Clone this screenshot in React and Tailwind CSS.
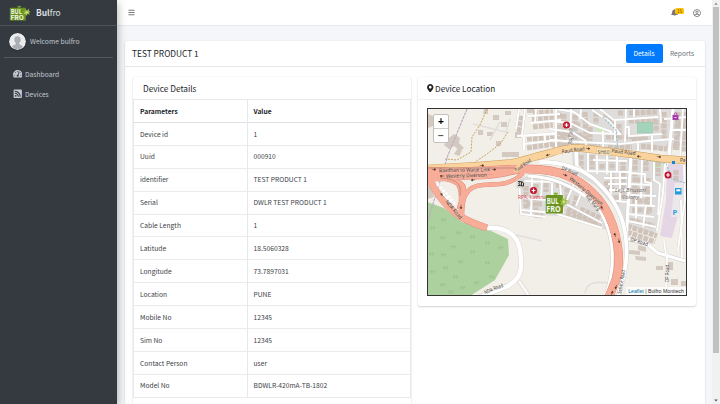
import React from "react";
import { FaBars, FaBell, FaRegUserCircle, FaTachometerAlt, FaRssSquare, FaMapMarkerAlt } from "react-icons/fa";

const rows = [
  ["Device id", "1"],
  ["Uuid", "000910"],
  ["identifier", "TEST PRODUCT 1"],
  ["Serial", "DWLR TEST PRODUCT 1"],
  ["Cable Length", "1"],
  ["Latitude", "18.5060328"],
  ["Longitude", "73.7897031"],
  ["Location", "PUNE"],
  ["Mobile No", "12345"],
  ["Sim No", "12345"],
  ["Contact Person", "user"],
  ["Model No", "BDWLR-420mA-TB-1802"],
];

function Logo(props) {
  return (
    <svg viewBox="0 0 25 18" {...props}>
      <rect x="0.5" y="3" width="18" height="14.5" rx="1" fill="#6b9322" />
      <path d="M11 3V0.8M9 1.5l2 1.2 2-1.2" stroke="#7fb52a" strokeWidth="1" fill="none" />
      <text x="1.600" y="9.700" fontSize="7" fontWeight="700" fill="#f4f8e8" textLength="12.500" lengthAdjust="spacingAndGlyphs">BUL</text>
      <text x="1.200" y="16.500" fontSize="7" fontWeight="700" fill="#f4f8e8" textLength="15" lengthAdjust="spacingAndGlyphs">FRO</text>
      <path d="M15 7l2.500.5.5-3 1.800 2 2.500-2.500-.4 2.900 2.200.3-2.200 1.500 1.200 2-2.800-.5-1 2.300-1.200-2.300-2.600.4 1.500-2z" fill="#9cc250" />
      <circle cx="19.500" cy="8.300" r="1.100" fill="#e8e27a" />
    </svg>
  );
}

// Minor streets, drawn first as a casing and then as a white core.
const streets = [
  "M516 129l3-20M525 109l-3 27 34-2M528 116l32-2M530 123l31-3M536 109l-1 14M517 136l40-3M524 136v14M545 133v10M524 144l34-4M556 109v44",
  "M557 109l17 3 16 12 22 8M550 121l20 2 20 10 30 1M550 129l22 3 14 9M571 109l-1 41M581 109l-1 10M550 140l30 2 40 2 28-3M603 131v18M586 142v6",
  "M592 110l17 11 12 14M600 109l14 11 44-3M615 121v20M626 109l-1 33M634 109v8M660 109l1 14M625 127l4 0v9l33-2M638 141v10M648 141l26-2M652 134v18M664 119l24-2M672 130h14",
  "M683 109l-3 48",
  "M577 150l1 21 52 1M588 152v19M597 152v22M607 154v20M593 160l34 1M617 155v17M584 171l-8-6-1-15",
  "M604 178h23M611 172v24M620 172v30M609 190h18M615 201l12 1M608 184h19",
  "M642 158l-1 40M630 173l15 1v8l6 1v23M654 160v20l6 4-2 31M629 184l21 1M629 195l27 1M629 205l26 1M628 214l26 3M646 205l-3 22M636 196v22M628 221l28 6",
  "M665 163l-2 30-6 38M664 170l8 5M684 165l1 35-7 50",
  "M519 178l2 36 24 3M523 181l36 1M532 177l-1 39M542 178l-1 22M523 198l23 2M552 181v20M522 210l32 3M560 184l3 29M574 184l-8 18M582 191l-6 15M564 203l38 20",
  "M557 214l45 14",
  "M667 254l-1 42M681 200l1 58M664 241l2 14",
];

// Wider through streets.
const wideStreets = ["M673 109l-4 46-3 12", "M631 156l-5 86", "M625 238l22 6 11 9 27 8"];

// Dash patterns along these lines read as rows of separate buildings.
const blocks = [
  "M533 113l20-1M532 119l22-1M533 127l20-2M519 132l3-16M527 139l27-2M527 148l26-4",
  "M559 113l-1 32M564 114v34M575 115v27M585 112l1 28M590 127v22M596 112v12M604 114l10 9M560 125h20M560 135h22M552 145l48 2M573 137h11",
  "M618 113l6 0M629 113l28-1M619 124v14M629 121h28M632 139h16M656 120v12M664 112v26M678 112l-2 38M667 146h15M641 146l26 3M606 137h38M608 147h24M676 124h9M677 134h9",
  "M581 155v14M592 155v14M602 164v9M612 158v35M623 160v38M635 160v38M646 161v10M658 162v14M648 178v36M616 195v10M606 181l3 11M637 180h9M632 190h18M632 201h18M632 210h20",
  "M526 186v26M536 184v28M546 183v9M527 204h15M534 215l9 1M556 185l7 1M567 188v16M577 196l-3 10M567 209l30 14M580 209l20 9M566 214l35 12",
  "M627 226l30 10M627 232l28 10M630 220l24 6M676 170v12M684 112v40",
];

const mainRoad = "M427 168.500L480 165.500L512 163C524 160 538 156 552 152.500C561 149 571 147.500 582 148.200L600 150.300L633 154.500L660 158.500L687 160.500";
const motorway = "M427 171L455 172L487 170.500L520 169C540 168.500 557 171 568 176C584 183 600 197 609 216C619 238 621 263 616 279L609 297";
const nda = "M426 173C432 185 439 197 446 204C455 214 463 220 487 228";
const ramps = [
  "M434 174C450 182 464 179 464 190C464 197 460 203 459 209",
  "M427 179L446 179C456 181 461 184 461 196L461 217",
  "M462 216C462 200 464 186 483 185L500 184C510 183 517 179 523 173",
  "M428 177C440 177 460 178 484 177C500 176 510 173 520 171",
];

function Label({ x, y, r = 0, w, s = 5.3, fill = "#3a302a", children }) {
  return (
    <text
      x={x}
      y={y}
      transform={`rotate(${r} ${x} ${y})`}
      textLength={w}
      lengthAdjust="spacingAndGlyphs"
      fontSize={s}
      fill={fill}
      stroke="#ffffff"
      strokeOpacity="0.3"
      strokeWidth="0.6"
      paintOrder="stroke"
    >
      {children}
    </text>
  );
}

function Arrow({ x, y, r = 0 }) {
  return <path transform={`translate(${x} ${y}) rotate(${r})`} d="M-2.200 0H1M0.300-0.900L2 0L0.300 0.900z" fill="#4b3326" stroke="#4b3326" strokeWidth="0.5" />;
}

function Hospital({ x, y }) {
  return (
    <g>
      <circle cx={x} cy={y} r="3.500" fill="#c4122f" />
      <path d={`M${x - 1.9} ${y}h3.800M${x} ${y - 1.9}v3.800`} stroke="#fff" strokeWidth="1.200" />
    </g>
  );
}

function MapDrawing() {
  return (
    <svg className="block h-full w-full" viewBox="428 109 258 186" preserveAspectRatio="none" fontFamily="'Noto Sans', sans-serif">
      <rect x="427" y="108" width="260" height="188" fill="#f2efe9" />
      <path d="M556 109H687V150L633 150L582 145L556 148zM572 151L632 158L664 163L656 235L626 226L612 204L596 186L573 172z" fill="#dfdddc" />
      <path d="M519 177L545 175L572 184L600 208L610 231L560 216L519 214z" fill="#dfdddc" />
      <path d="M427 202L444 208L462 222L487 229L508 239L509 255L495 280L470 296H427z" fill="#add19e" />
      <g>
        {[[441, 220], [456, 233], [440, 238], [470, 237], [451, 247], [485, 243], [498, 248], [441, 255], [470, 252], [458, 262], [443, 268], [485, 263], [430, 272], [453, 277], [440, 285], [474, 283], [489, 277], [460, 288], [448, 292], [430, 228], [429, 254]].map(([x, y]) => (
          <path key={`${x}-${y}`} d={`M${x} ${y}q1.200-3 2.400 0M${x + 2.6} ${y}q1.200-3 2.400 0M${x + 1.2} ${y}v1.500M${x + 3.8} ${y}v1.500`} fill="none" stroke="#8fba80" strokeWidth="0.7" />
        ))}
      </g>
      <path d="M667 163L686 165L682 200L672 238L660 236L666 200z" fill="#e5d6e6" />
      <path d="M675 183h8l-3 34h-9z" fill="#ece9ea" />
      <path d="M595 127l5-1 8 5-9 1zM652 163l8-2 3 5-8 3z" fill="#c8ecb4" />

      <g fill="#d4c9c1">
        <path d="M449 138l5-4 6 4-1 5 5 5-4 3-6-5-5 3-5-4zM458 148l4 3-3 5-5-2zM428 114l5 2v10l-5 2zM428 186h4l2 11-6 2z" />
        <path d="M484 109h4v5h-5zM493 115h6v5h-6zM487 132h6v4h-6zM478 130h5v5h-5zM501 122h6v5h-6zM502 152h17v5h-17zM515 132h6v6h-6zM527 109h7v4h-7zM505 111h6v4h-6zM496 141h5v5h-5z" />
        <path d="M629 250l11 1v4l-11-1zM638 245l8 2v5l-8-2zM656 266h7v4h-7zM671 279h7v6h-7zM668 262h5v8h-5zM681 281h5v5h-5zM635 256l11 1v4l-10-1z" />
      </g>
      <g fill="none" stroke="#d0c3b9" strokeWidth="5.200" strokeDasharray="4.800 1">
        {blocks.map((d) => <path key={d} d={d} />)}
      </g>
      <g fill="none" stroke="#d0cdca" strokeWidth="2.500" strokeLinejoin="round">
        {streets.map((d) => <path key={d} d={d} />)}
      </g>
      <g fill="none" stroke="#cbc8c5" strokeWidth="4" strokeLinejoin="round">
        {wideStreets.map((d) => <path key={d} d={d} />)}
      </g>
      <g fill="none" stroke="#fff" strokeWidth="1.900" strokeLinejoin="round">
        {streets.map((d) => <path key={d} d={d} />)}
      </g>
      <g fill="none" stroke="#fff" strokeWidth="3.300" strokeLinejoin="round">
        {wideStreets.map((d) => <path key={d} d={d} />)}
      </g>
      <rect x="637.500" y="122.500" width="15" height="10.500" fill="#a3d3ba" stroke="#8ec4a7" strokeWidth="0.5" />
      <path d="M473 124l33 8 4-13M500 122l-10 18M516 235l26 6M585 293c2-10 8-12 24-10" fill="none" stroke="#e2dfda" strokeWidth="1.600" />
      <path d="M487 109l-7 16-8 12-1 15-14 8-12-1M508 132l-8 12-13 10-12 8" fill="none" stroke="#c9a45c" strokeWidth="1" strokeDasharray="2 1.200" />
      <path d="M467 109L448 155L428 220" fill="none" stroke="#bba9c5" strokeWidth="1.100" strokeDasharray="3 0.8" />
      <path d="M603 117l13 13 2 20M632 158l34 5 6 16 14 4" fill="none" stroke="#8fc0cc" strokeWidth="1.100" strokeDasharray="2 1.500" />

      <path d="M487 228C505 226 518 235 520 250C523 270 521 278 508 286L480 297M519 281l10 15" fill="none" stroke="#d0cdc8" strokeWidth="5.200" />
      <path d="M519 281l10 15" fill="none" stroke="#f2efe9" strokeWidth="5.400" />
      <path d="M519 281l10 15" fill="none" stroke="#d0cdc8" strokeWidth="3" />
      <path d="M487 228C505 226 518 235 520 250C523 270 521 278 508 286L480 297" fill="none" stroke="#fff" strokeWidth="4.500" />
      <path d="M519 281l10 15" fill="none" stroke="#fff" strokeWidth="2.200" />
      <path d="M540 162C563 162 585 169 598 183C612 196 624 215 626 240C628 262 624 276 618 297" fill="none" stroke="#c9c5c1" strokeWidth="4.500" />
      <path d="M540 162C563 162 585 169 598 183C612 196 624 215 626 240C628 262 624 276 618 297" fill="none" stroke="#fff" strokeWidth="3.800" />
      <path d="M528 176C558 177 586 192 601 212C613 234 616 262 607 292" fill="none" stroke="#c9c5c1" strokeWidth="3.800" />
      <path d="M528 176C558 177 586 192 601 212C613 234 616 262 607 292" fill="none" stroke="#fff" strokeWidth="3.100" />

      <path d={mainRoad} fill="none" stroke="#c69a58" strokeWidth="7.600" />
      <path d={mainRoad} fill="none" stroke="#fad39c" strokeWidth="6.700" />
      <g fill="none" stroke="#dc8272" strokeWidth="4.500">
        {ramps.map((d) => <path key={d} d={d} />)}
      </g>
      <path d={nda} fill="none" stroke="#dc8272" strokeWidth="7" />
      <path d={motorway} fill="none" stroke="#dc8272" strokeWidth="8.700" />
      <g fill="none" stroke="#f8ad99" strokeWidth="3.800">
        {ramps.map((d) => <path key={d} d={d} />)}
      </g>
      <path d={nda} fill="none" stroke="#f8ad99" strokeWidth="6.400" />
      <path d={motorway} fill="none" stroke="#f8ad99" strokeWidth="8" />
      <path d="M428 168h92M440 178c20 1 21 8 20 18" fill="none" stroke="#8a6a60" strokeWidth="0.5" />
      <path d="M515 172l8-12" stroke="#fad39c" strokeWidth="4" />
      <path d="M437 184l12 12 6 8M443 194l8 8" fill="none" stroke="#fff" strokeWidth="2.600" strokeDasharray="2.500 1.600" />

      <Arrow x="482" y="165.500" />
      <Arrow x="548" y="155" r="165" />
      <Arrow x="588" y="148.500" r="8" />
      <Arrow x="639" y="156.500" r="187" />
      <Arrow x="659" y="156.800" r="8" />
      <Arrow x="434" y="169.500" />
      <Arrow x="494" y="169.500" />
      <Arrow x="442" y="176" r="180" />
      <Arrow x="473" y="180" r="175" />
      <Arrow x="565" y="175" r="22" />
      <Arrow x="602" y="208" r="235" />
      <Arrow x="615" y="235" r="255" />
      <Arrow x="619" y="241" r="80" />
      <Arrow x="616" y="287" r="110" />
      <Arrow x="612" y="293" r="290" />
      <Arrow x="442" y="195" r="230" />
      <Arrow x="461" y="207" r="90" />

      <Label x={439} y={172.200} r={-1} w={51}>Bavdhan to Warje Link</Label>
      <Label x={446} y={178} r={-2} w={41}>Westerly Diversion</Label>
      <Label x={516} y={172} r={-34} w={19}>Paud Road</Label>
      <Label x={562} y={153.500} r={-8} w={23}>Paud Road</Label>
      <Label x={611.500} y={152.500} r={6} w={24}>Paud Road</Label>
      <Label x={680} y={162} w={5.500}>Pa</Label>
      <rect x="596.500" y="148.500" width="14" height="6.500" rx="1" fill="#f9e5c4" stroke="#d9bb85" strokeWidth="0.4" />
      <text x="597.500" y="153.800" fontSize="5" fill="#6b5a3a" textLength="12" lengthAdjust="spacingAndGlyphs">SH60</text>
      <Label x={561} y={169.500} r={22} w={17}>DP Road</Label>
      <Label x={569} y={179} r={40} w={42}>Westerly Diversion</Label>
      <Label x={585} y={197} r={47} w={19}>Net Marg</Label>
      <Label x={445} y={202} r={50} w={23}>NDA Road</Label>
      <Label x={485} y={294.300} r={-22} w={20}>NDA Road</Label>
      <Label x={630} y={241} r={16} w={18}>DP Road</Label>
      <Label x={669} y={282} r={-90} w={17}>DP Road</Label>
      <Label x={621} y={294} r={-80} w={24}>Service Road</Label>
      <Label x={572} y={144} r={-88} w={16}>Raj Path</Label>
      <g fontStyle="italic">
        <Label x={615} y={191.500} w={31} s={6} fill="#77706d">Left Bhusari</Label>
        <Label x={622} y={198.500} w={17} s={6} fill="#77706d">Colony</Label>
      </g>
      <Hospital x={566.500} y={125} />
      <Hospital x={668} y={175} />
      <Hospital x={533.500} y={190.500} />
      <text x="518" y="199" fontSize="5" fill="#d64a55" textLength="27.500" lengthAdjust="spacingAndGlyphs">RPA, Kothru</text>
      <rect x="516.500" y="179.500" width="8" height="8.500" fill="#d7d3ce" />
      <path d="M518 181.500h2.500l-1.500 2 1.500 2h-2.500M521.500 181.500l2 1.500v3h-2z" fill="none" stroke="#222" strokeWidth="0.9" />
      <rect x="672.500" y="115" width="6" height="5" fill="#a93caf" />
      <path d="M674.200 115v-1.500q1.300-1.500 2.600 0v1.500" fill="none" stroke="#a93caf" strokeWidth="0.8" />
      <path d="M674.500 117.500h2" stroke="#fff" strokeWidth="0.8" />
      <rect x="672" y="161" width="3" height="3" fill="#1186d8" />
      <path d="M675 188h6.500v6.500h-6.500z" fill="#229ae0" />
      <path d="M676.300 189.300h4v2h-4z" fill="#fff" />
      <text x="672.500" y="214.500" fontSize="7.800" fontWeight="600" fill="#229ae0">P</text>
      <Logo x="545.200" y="191.200" width="24" height="23" preserveAspectRatio="none" />
    </svg>
  );
}

export default function App() {
  return (
    <div className="flex h-[404px] w-[720px] overflow-hidden bg-[#f4f6f9] font-['Noto_Sans_CJK_SC','Noto_Sans',sans-serif] text-[6.700px] text-[#212529]">
      <aside className="z-10 flex w-[117px] shrink-0 flex-col bg-[#343a40] text-[#c2c7d0] shadow-[0_3px_9px_rgba(0,0,0,0.35)]">
        <div className="flex h-[26px] items-center border-b border-[#4b545c] pl-[9px] text-[8.400px] leading-none text-[#dfe1e3]">
          <Logo className="mr-[4px] h-[16px] w-[23px]" />
          <span><b>Bul</b>fro</span>
        </div>
        <div className="mx-[4px] flex h-[32px] items-center border-b border-[#4f5962] pl-[5px]">
          <svg className="h-[17px] w-[17px] rounded-full shadow" viewBox="0 0 17 17">
            <circle cx="8.500" cy="8.500" r="8.500" fill="#e9ebec" />
            <path d="M8.500 3.200c2.300 0 3.300 1.600 3.200 3.500 0 1.600-.8 2.700-1.500 3.300v1.200c1.500.6 3 .9 3.700 2.600-1.500 1.800-3.200 2.500-5.400 2.500s-3.900-.7-5.400-2.500c.7-1.700 2.200-2 3.700-2.600V10c-.7-.6-1.500-1.700-1.500-3.300-.1-1.900.9-3.500 3.200-3.500z" fill="#a9aeb2" />
          </svg>
          <span className="ml-[4px] text-[6.750px] leading-none">Welcome bulfro</span>
        </div>
        <nav className="flex flex-col pt-[6px] leading-none">
          <div className="flex h-[20px] items-center gap-[3px] pl-[12.500px]"><FaTachometerAlt className="h-[9.500px] w-[9.500px]" /><span>Dashboard</span></div>
          <div className="flex h-[20px] items-center gap-[3px] pl-[12.500px]"><FaRssSquare className="h-[9.500px] w-[9.500px]" /><span>Devices</span></div>
        </nav>
      </aside>

      <div className="flex w-[595px] shrink-0 flex-col">
        <header className="flex h-[26px] shrink-0 items-center border-b border-[#e6e9ed] bg-white pr-[11px] pl-[11px] text-[#777777]">
          <FaBars className="h-[7px] w-[7px]" />
          <div className="relative mr-[15px] ml-auto">
            <FaBell className="h-[7.500px] w-[7px]" />
            <span className="absolute -top-[1px] left-[4px] flex h-[6px] w-[9px] items-center justify-center rounded-[1.500px] bg-[#ffc107] text-[4.500px] leading-none text-[#5c4a18]">15</span>
          </div>
          <FaRegUserCircle className="h-[8px] w-[8px]" />
        </header>

        <main className="mt-[15px] ml-[8px] w-[580px] grow rounded-t-[2px] bg-white shadow-[0_0_1px_rgba(0,0,0,0.13),0_1px_2px_rgba(0,0,0,0.16)]">
          <div className="flex h-[26px] items-center border-b border-[#e6e7e8] pr-[3.500px] pl-[7px]">
            <h1 className="text-[8.350px] leading-none">TEST PRODUCT 1</h1>
            <div className="ml-auto flex items-center leading-none">
              <span className="flex h-[19px] w-[37px] items-center justify-center rounded-[2px] bg-[#007bff] text-white">Details</span>
              <span className="flex h-[19px] w-[39px] items-center justify-center text-[#6c757d]">Reports</span>
            </div>
          </div>
          <div className="flex items-start gap-[7px] pt-[10px] pl-[8px]">
            <section className="h-[340px] w-[278px] rounded-[2px] shadow-[0_0_1px_rgba(0,0,0,0.13),0_1px_2px_rgba(0,0,0,0.16)]">
              <h2 className="flex h-[22px] items-center pl-[10px] text-[8.250px] leading-none">Device Details</h2>
              <table className="w-full table-fixed border-collapse border border-[#e6e9ec] leading-none">
                <thead>
                  <tr className="h-[23px] border-b border-[#dde1e5]">
                    <th className="w-[114px] border-r border-[#e6e9ec] pl-[6px] text-left font-bold">Parameters</th>
                    <th className="pl-[5.500px] text-left font-bold">Value</th>
                  </tr>
                </thead>
                <tbody className="text-[#3d4247]">
                  {rows.map(([name, value]) => (
                    <tr key={name} className="h-[22.900px] border-b border-[#e9ebee]">
                      <td className="border-r border-[#e6e9ec] pl-[6px]">{name}</td>
                      <td className="pl-[5.500px]">{value}</td>
                    </tr>
                  ))}
                </tbody>
              </table>
            </section>
            <section className="h-[229px] w-[278px] rounded-[2px] shadow-[0_0_1px_rgba(0,0,0,0.13),0_1px_2px_rgba(0,0,0,0.16)]">
              <h2 className="flex h-[23px] items-center border-b border-[#f0f1f2] pl-[9px] text-[8.200px] leading-none">
                <FaMapMarkerAlt className="mr-[1.500px] h-[8.500px] w-[6.500px]" />Device Location
              </h2>
              <div className="relative mt-[8px] ml-[9px] h-[188px] w-[260px] overflow-hidden border border-[#333] font-['Liberation_Sans',Arial,sans-serif]">
                <MapDrawing />
                <div className="absolute top-[5px] left-[5px] flex w-[16px] flex-col rounded-[2px] border border-[#c4c1bc] bg-white text-center leading-none font-bold">
                  <span className="flex h-[14px] items-center justify-center border-b border-[#ccc] text-[10px] text-black">+</span>
                  <span className="flex h-[13px] items-center justify-center text-[10px] text-[#555]">−</span>
                </div>
                <div className="absolute right-0 bottom-0 bg-white/75 px-[2px] py-[1px] text-[5.200px] leading-[6px] whitespace-nowrap text-[#333]">
                  <span className="text-[#0078a8]">Leaflet</span> | Bulfro Monitech
                </div>
              </div>
            </section>
          </div>
        </main>
      </div>

      <div className="flex w-[8px] shrink-0 flex-col items-center bg-[#f1f1f1]">
        <svg className="h-[7px] w-[8px]" viewBox="0 0 8 7"><path d="M2.200 4.800L4 2.800L5.800 4.800z" fill="#8a8a8a" /></svg>
        <div className="h-[346px] w-[6px] bg-[#c1c1c1]" />
        <svg className="mt-auto h-[7px] w-[8px]" viewBox="0 0 8 7"><path d="M2.200 2.500L4 4.500L5.800 2.500z" fill="#505050" /></svg>
      </div>
    </div>
  );
}
